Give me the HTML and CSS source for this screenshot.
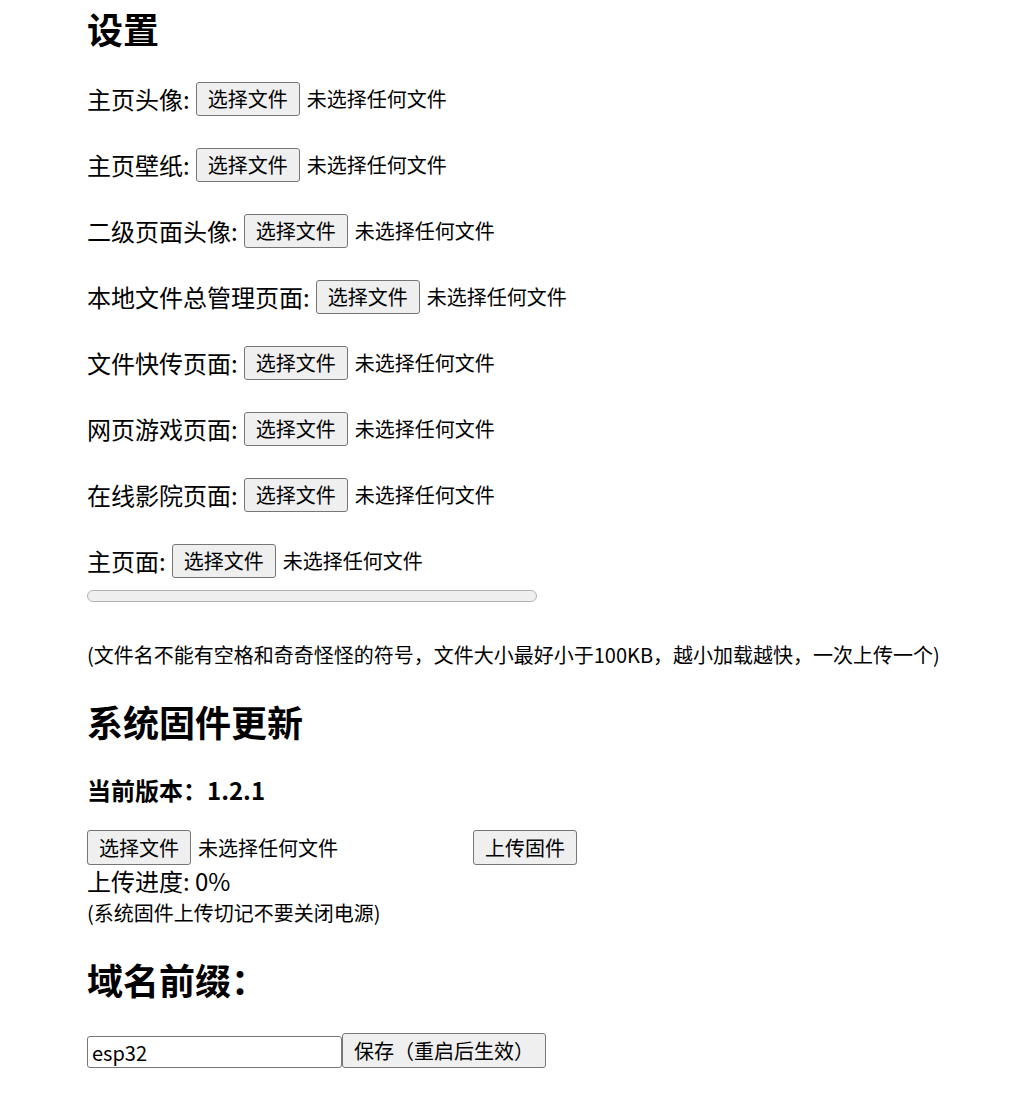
FILE: index.html
```html
<!DOCTYPE html>
<html>
<head>
  <meta charset="utf-8">
  <title>设置</title>
  <link rel="stylesheet" href="styles.css">
</head>
<body>
<div class="page">
  <h2>设置</h2>

  <div class="uploads">
    <div class="row"><label>主页头像:</label><span class="file"><button>选择文件</button><span class="fname">未选择任何文件</span></span></div>
    <div class="row"><label>主页壁纸:</label><span class="file"><button>选择文件</button><span class="fname">未选择任何文件</span></span></div>
    <div class="row"><label>二级页面头像:</label><span class="file"><button>选择文件</button><span class="fname">未选择任何文件</span></span></div>
    <div class="row"><label>本地文件总管理页面:</label><span class="file"><button>选择文件</button><span class="fname">未选择任何文件</span></span></div>
    <div class="row"><label>文件快传页面:</label><span class="file"><button>选择文件</button><span class="fname">未选择任何文件</span></span></div>
    <div class="row"><label>网页游戏页面:</label><span class="file"><button>选择文件</button><span class="fname">未选择任何文件</span></span></div>
    <div class="row"><label>在线影院页面:</label><span class="file"><button>选择文件</button><span class="fname">未选择任何文件</span></span></div>
    <div class="row"><label>主页面:</label><span class="file"><button>选择文件</button><span class="fname">未选择任何文件</span></span></div>
  </div>

  <div class="bar"><div class="bar-fill" style="width: 0%"></div></div>

  <p class="hint">(文件名不能有空格和奇奇怪怪的符号，文件大小最好小于100KB，越小加载越快，一次上传一个)</p>

  <h2>系统固件更新</h2>
  <h4>当前版本：1.2.1</h4>

  <div class="fw-row">
    <span class="file fw-file"><button>选择文件</button><span class="fname">未选择任何文件</span></span>
    <button>上传固件</button>
  </div>
  <div class="fw-progress">上传进度: 0%</div>
  <div class="fw-note">(系统固件上传切记不要关闭电源)</div>

  <h2 class="domain-title">域名前缀：</h2>
  <div class="domain-row">
    <input type="text" value="esp32"><button>保存（重启后生效）</button>
  </div>
</div>
</body>
</html>
```

FILE: styles.css
```css
html, body {
  margin: 0;
  padding: 0;
}

body {
  background: #fff;
  color: #000;
  font-family: "Noto Sans CJK SC", "Noto Sans", sans-serif;
  font-size: 24px;
}

.page {
  padding: 0 40px 0 87px;
}

h2 {
  font-size: 36px;
  font-weight: bold;
  line-height: 48px;
  margin: 27px 0 0;
}

.page > h2:first-child {
  margin-top: 4px;
}

h4 {
  font-size: 24px;
  font-weight: bold;
  line-height: 32px;
  margin: 29px 0 0;
}

button {
  font-family: inherit;
  font-size: 20px;
  color: #000;
  background-color: #efefef;
  border: 1px solid #767676;
  border-radius: 3px;
  height: 34px;
  padding: 0 11px;
  line-height: 1;
  margin: 0;
}

/* 上传列表 */
.uploads {
  display: flex;
  flex-direction: column;
  gap: 24px;
  margin-top: 26px;
}

.row {
  display: flex;
  align-items: center;
  height: 42px;
}

.row label {
  margin-right: 6px;
  line-height: 32px;
}

.file {
  display: flex;
  align-items: center;
}

.fname {
  font-size: 20px;
  margin-left: 7px;
  line-height: 28px;
}

.bar {
  margin-top: 8px;
  width: 450px;
  height: 12px;
  box-sizing: border-box;
  border: 1px solid #b2b2b2;
  border-radius: 6px;
  background-color: #efefef;
  overflow: hidden;
}

.bar-fill {
  height: 100%;
  background-color: #4caf50;
}

.hint {
  font-size: 20px;
  line-height: 30px;
  margin: 38px 0 0;
  white-space: nowrap;
}

/* 固件 */
.fw-row {
  display: flex;
  align-items: center;
  gap: 6px;
  margin-top: 24px;
  height: 35px;
}

.fw-row button {
  height: 35px;
}

.fw-file {
  width: 380px;
}

.fw-progress {
  line-height: 32px;
}

.fw-note {
  font-size: 20px;
  line-height: 30px;
  margin-top: 1px;
}

/* 域名 */
.domain-row {
  display: flex;
  align-items: flex-end;
  margin-top: 30px;
}

.domain-row input {
  box-sizing: border-box;
  width: 255px;
  height: 32px;
  font-family: inherit;
  font-size: 20px;
  padding: 0 4px;
  border: 1px solid #767676;
  border-radius: 3px;
  margin: 0;
}

.domain-row button {
  height: 35px;
  padding: 0 11px;
}
```
